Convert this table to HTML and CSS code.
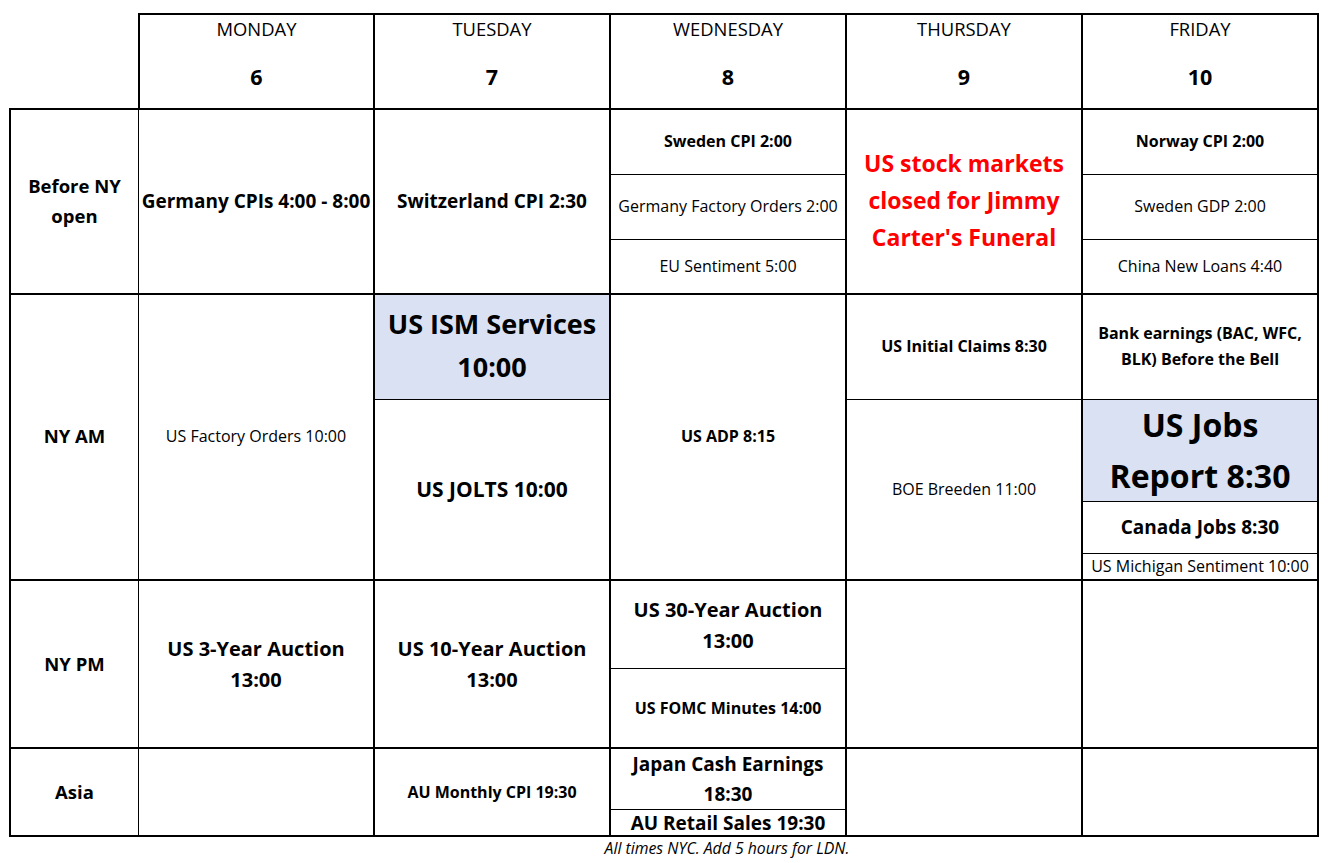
FILE: index.html
```html
<!DOCTYPE html>
<html lang="en">
<head>
<meta charset="utf-8">
<title>Weekly Calendar</title>
<link rel="stylesheet" href="styles.css">
</head>
<body>
<div class="schedule">
  <div class="corner"></div>
  <div class="day"><div class="dname">MONDAY</div><div class="dnum">6</div></div>
  <div class="day"><div class="dname">TUESDAY</div><div class="dnum">7</div></div>
  <div class="day"><div class="dname">WEDNESDAY</div><div class="dnum">8</div></div>
  <div class="day"><div class="dname">THURSDAY</div><div class="dnum">9</div></div>
  <div class="day fri"><div class="dname">FRIDAY</div><div class="dnum">10</div></div>

  <div class="label">Before NY<br>open</div>
  <div class="cell mon"><span class="b19">Germany CPIs 4:00 - 8:00</span></div>
  <div class="cell"><span class="b19">Switzerland CPI 2:30</span></div>
  <div class="cell stack">
    <div class="sub s-pre1"><span class="b16">Sweden CPI 2:00</span></div>
    <div class="sub s-pre2"><span class="r16">Germany Factory Orders 2:00</span></div>
    <div class="sub fill"><span class="r16">EU Sentiment 5:00</span></div>
  </div>
  <div class="cell"><span class="red">US stock markets closed for Jimmy Carter's Funeral</span></div>
  <div class="cell stack fri">
    <div class="sub s-pre1"><span class="b16">Norway CPI 2:00</span></div>
    <div class="sub s-pre2"><span class="r16">Sweden GDP 2:00</span></div>
    <div class="sub fill"><span class="r16">China New Loans 4:40</span></div>
  </div>

  <div class="label">NY AM</div>
  <div class="cell mon"><span class="r16">US Factory Orders 10:00</span></div>
  <div class="cell stack">
    <div class="sub s-am1 hi"><span class="b27">US ISM Services 10:00</span></div>
    <div class="sub fill"><span class="b21">US JOLTS 10:00</span></div>
  </div>
  <div class="cell"><span class="b16">US ADP 8:15</span></div>
  <div class="cell stack">
    <div class="sub s-am1"><span class="b16">US Initial Claims 8:30</span></div>
    <div class="sub fill"><span class="r16">BOE Breeden 11:00</span></div>
  </div>
  <div class="cell stack fri">
    <div class="sub s-am1"><span class="b16 lh26">Bank earnings (BAC, WFC, BLK) Before the Bell</span></div>
    <div class="sub s-jobs hi"><span class="b32">US Jobs Report 8:30</span></div>
    <div class="sub s-can"><span class="b19">Canada Jobs 8:30</span></div>
    <div class="sub fill"><span class="r16">US Michigan Sentiment 10:00</span></div>
  </div>

  <div class="label low">NY PM</div>
  <div class="cell mon low"><span class="b20 lh31">US 3-Year Auction<br>13:00</span></div>
  <div class="cell low"><span class="b20 lh31">US 10-Year Auction<br>13:00</span></div>
  <div class="cell stack low">
    <div class="sub s-pm1"><span class="b20 lh31">US 30-Year Auction<br>13:00</span></div>
    <div class="sub fill"><span class="b16">US FOMC Minutes 14:00</span></div>
  </div>
  <div class="cell low"></div>
  <div class="cell fri low"></div>

  <div class="label last low">Asia</div>
  <div class="cell mon last low"></div>
  <div class="cell last low"><span class="b16">AU Monthly CPI 19:30</span></div>
  <div class="cell stack last low">
    <div class="sub s-as1"><span class="b19 lh30">Japan Cash Earnings<br>18:30</span></div>
    <div class="sub fill"><span class="b19">AU Retail Sales 19:30</span></div>
  </div>
  <div class="cell last low"></div>
  <div class="cell fri last low"></div>

  <div class="note">All times NYC. Add 5 hours for LDN.</div>
</div>
</body>
</html>
```

FILE: styles.css
```css
* { box-sizing: border-box; }

html, body {
  margin: 0;
  padding: 0;
  background: #ffffff;
}

body {
  font-family: "Open Sans", "Liberation Sans", sans-serif;
  color: #000000;
  padding: 13px 0 0 9px;
}

.schedule {
  display: grid;
  grid-template-columns: 129px 235px 236px 236px 236px 238px;
  grid-template-rows: 95px 185px 286px 168px 90px auto;
}

.day {
  border-top: 2px solid #000;
  border-left: 2px solid #000;
  display: flex;
  flex-direction: column;
  align-items: center;
  padding-top: 2px;
}

.dname {
  font-size: 18.4px;
  line-height: 24px;
  font-weight: 400;
}

.dnum {
  font-size: 21.5px;
  line-height: 28px;
  font-weight: 700;
  margin-top: 22px;
}

.day.fri,
.cell.fri {
  border-right: 2px solid #000;
}

.label {
  border-top: 2px solid #000;
  border-left: 2px solid #000;
  display: flex;
  align-items: center;
  justify-content: center;
  text-align: center;
  font-size: 18.5px;
  font-weight: 700;
  line-height: 30px;
  padding-bottom: 2px;
}

.cell {
  border-top: 2px solid #000;
  border-left: 2px solid #000;
  display: flex;
  align-items: center;
  justify-content: center;
  text-align: center;
  padding-bottom: 2px;
}

.cell.mon {
  border-left: 1px solid #000;
}

.last {
  border-bottom: 2px solid #000;
}

.cell.stack {
  flex-direction: column;
  align-items: stretch;
  justify-content: flex-start;
  padding-bottom: 0;
}

.sub {
  display: flex;
  align-items: center;
  justify-content: center;
  text-align: center;
  border-bottom: 1px solid #000;
  flex: none;
  padding-bottom: 2px;
}

.sub.fill {
  flex: 1;
  border-bottom: none;
}

.low,
.low .sub {
  padding-bottom: 0;
}

.s-pre1 { height: 65px; }
.s-pre2 { height: 65px; }
.s-am1 { height: 105px; }
.s-jobs { height: 102px; }
.s-can { height: 52px; }
.s-pm1 { height: 88px; }
.s-as1 { height: 61px; }

.hi {
  background: #d9e1f2;
}

.sub.s-am1.hi {
  padding-bottom: 4px;
}

.b16 { font-size: 16px; font-weight: 700; line-height: 22px; }
.b19 { font-size: 19px; font-weight: 700; line-height: 26px; }
.b20 { font-size: 20px; font-weight: 700; line-height: 28px; }
.b21 { font-size: 21px; font-weight: 700; line-height: 28px; }
.b27 { font-size: 27px; font-weight: 700; line-height: 43px; padding: 0 6px; }
.b32 { font-size: 32px; font-weight: 700; line-height: 51px; padding: 0 20px; }
.r16 { font-size: 16px; font-weight: 400; line-height: 22px; }

.lh26 { line-height: 26px; padding: 0 6px; }
.lh30 { line-height: 30px; }
.lh31 { line-height: 31px; }

.red {
  color: #ff0000;
  font-size: 23px;
  font-weight: 700;
  line-height: 37px;
  padding: 0 10px 0;
}

.note {
  grid-column: 4;
  justify-self: center;
  white-space: nowrap;
  font-size: 15.8px;
  font-style: italic;
  line-height: 22px;
  margin-top: 0;
}
```
